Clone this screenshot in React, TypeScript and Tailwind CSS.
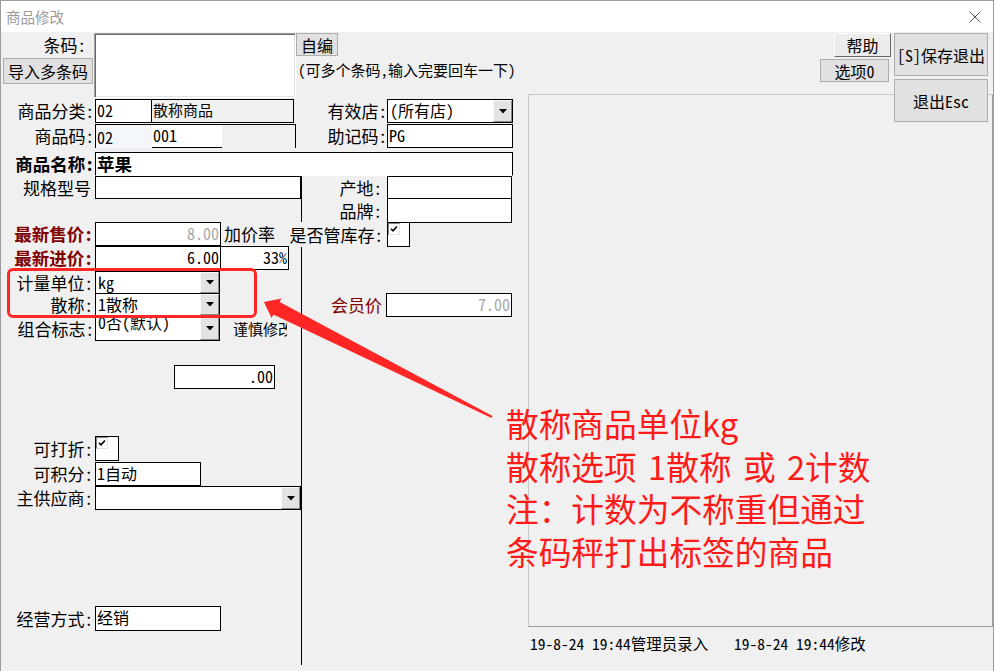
import React from "react";

const UI = "font-['Noto_Sans_Mono_CJK_SC','Noto_Sans_CJK_SC',sans-serif]";

type P = { className?: string; children?: React.ReactNode };

function Btn({ className = "", children }: P) {
  return (
    <div className={`shrink-0 bg-[#e1e1e1] border border-[#adadad] flex items-center justify-center whitespace-nowrap ${className}`}>
      {children}
    </div>
  );
}

function L({ className = "", children }: P) {
  return <div className={`shrink-0 flex items-center justify-end whitespace-nowrap leading-[18px] ${className}`}>{children}</div>;
}

function In({ className = "", children }: P) {
  return (
    <div className={`shrink-0 border border-black whitespace-nowrap leading-[20px] ${className}`}>
      {children}
    </div>
  );
}

function Drop() {
  return (
    <div className="w-[19px] h-full shrink-0 bg-[#e3e3e3] border border-t-[#fafafa] border-l-[#fafafa] border-r-[#8a8a8a] border-b-[#8a8a8a] flex items-center justify-center">
      <svg width="8" height="5" viewBox="0 0 8 5">
        <path d="M0 0H8L4 4.5Z" fill="#000" />
      </svg>
    </div>
  );
}

function Sel({ className = "", children }: P) {
  return (
    <div className={`shrink-0 border border-black bg-white flex ${className}`}>
      <div className="flex-1 pl-[2px] leading-[20px] whitespace-nowrap">{children}</div>
      <Drop />
    </div>
  );
}

function Chk({ className = "" }: P) {
  return (
    <div className={`shrink-0 border border-black bg-white ${className}`}>
      <div className="w-[12px] h-[12px] border border-t-[#808080] border-l-[#808080] border-r-[#e3e3e3] border-b-[#e3e3e3] bg-white flex items-center justify-center">
        <svg width="8" height="8" viewBox="0 0 8 8">
          <path d="M1 3.8L3 5.8L7 1.5" fill="none" stroke="#000" strokeWidth="1.6" />
        </svg>
      </div>
    </div>
  );
}

export default function App() {
  return (
    <div className={`relative w-[997px] h-[671px] bg-white overflow-hidden text-[16px] text-black ${UI}`}>
      <div className="w-[994px] h-[671px] border-l border-r border-t border-[#9c9c9c] bg-[#f0f0f0] flex flex-col">
        {/* title bar */}
        <div className="h-[31px] shrink-0 bg-white flex items-center justify-between pl-[5px] pr-[12px]">
          <span className="text-[#9a9a9a] text-[14.5px] font-['Noto_Sans_CJK_SC',sans-serif]">商品修改</span>
          <svg width="12" height="12" viewBox="0 0 12 12">
            <path d="M0.5 0.5L11.5 11.5M11.5 0.5L0.5 11.5" stroke="#555" strokeWidth="1" />
          </svg>
        </div>

        {/* top row */}
        <div className="h-[66px] shrink-0 flex items-start pr-[5px]">
          <div className="w-[93px] shrink-0 flex flex-col">
            <div className="h-[25px] leading-[25px] text-right pr-[8px] text-[17px]">条码:</div>
            <Btn className="ml-[2px] mt-[1px] w-[90px] h-[26px]">导入多条码</Btn>
          </div>
          <div className="mt-[1px] w-[202px] h-[65px] shrink-0 bg-white border border-t-[#a0a0a0] border-l-[#a0a0a0] border-r-white border-b-white shadow-[inset_1px_1px_0_#696969,inset_-1px_-1px_0_#e3e3e3]" />
          <div className="w-[42px] shrink-0 flex flex-col">
            <Btn className="mt-[1px] w-[42px] h-[23px]">自编</Btn>
            <div className="mt-[5px] ml-[2px] whitespace-nowrap leading-[18px] text-[15px]">(可多个条码,输入完要回车一下)</div>
          </div>
          <div className="flex-1" />
          <div className="flex flex-col items-end shrink-0">
            <div className="mt-[1px] w-[57px] h-[24px] bg-[#ececec] border border-t-white border-l-white border-r-[#696969] border-b-[#696969] flex items-center justify-center">帮助</div>
            <Btn className="mt-[2px] mr-[2px] w-[69px] h-[23px]">选项0</Btn>
          </div>
          <div className="ml-[3px] w-[94px] shrink-0 flex flex-col relative z-10">
            <Btn className="mt-[1px] h-[43px]">[S]保存退出</Btn>
            <Btn className="mt-[3px] h-[43px]">退出Esc</Btn>
          </div>
        </div>

        {/* body */}
        <div className="flex-1 flex items-start">
          <div className="w-[527px] shrink-0 flex flex-col">
            {/* row 1 */}
            <div className="mt-[1px] h-[24px] flex">
              <L className="w-[94px] pr-[1px] text-[17px]">商品分类:</L>
              <In className="w-[57px] h-full bg-white pl-[1px]">02</In>
              <In className="-ml-px w-[143px] h-full bg-[#f0f0f0] pl-[1px] text-[15px]">散称商品</In>
              <div className="w-[7px] shrink-0" />
              <L className="w-[86px] text-[17px]">有效店:</L>
              <Sel className="w-[126px] h-full">(所有店)</Sel>
            </div>
            {/* row 2 */}
            <div className="mt-[1px] h-[24px] flex">
              <L className="w-[94px] pr-[1px] text-[17px]">商品码:</L>
              <div className="w-[201px] h-full shrink-0 border-t border-l border-r border-black flex">
                <div className="w-[56px] bg-[#f3f6fb] pl-[1px] pt-[2px] leading-[20px]">02</div>
                <div className="w-[70px] bg-white border-b border-black pl-[1px] leading-[20px]">001</div>
                <div className="flex-1" />
              </div>
              <div className="w-[5px] shrink-0" />
              <L className="w-[86px] text-[17px]">助记码:</L>
              <In className="w-[126px] h-full bg-white pl-[1px]">PG</In>
            </div>
            {/* row 3 */}
            <div className="mt-[4px] h-[24px] flex">
              <L className="w-[94px] pr-[1px] font-bold text-[17.5px]">商品名称:</L>
              <div className="w-[418px] h-full shrink-0 border-t border-l border-r border-black border-b border-b-white bg-white font-bold text-[17.5px] pl-[1px] leading-[21px]">
                苹果
              </div>
            </div>

            {/* two columns */}
            <div className="flex items-start">
              <div className="w-[301px] h-[489px] shrink-0 border-r border-black flex flex-col">
                <div className="h-[23px] flex">
                  <L className="w-[94px] pr-[4px] text-[17px]">规格型号</L>
                  <In className="w-[206px] h-full bg-white" />
                </div>
                <div className="mt-[23px] h-[24px] flex">
                  <L className="w-[94px] pr-[2px] font-bold text-[17.5px] text-[#800000]">最新售价:</L>
                  <In className="w-[126px] h-full bg-white text-right pr-[1px] text-[#a8a8a8]">8.00</In>
                  <div className="pl-[3px] leading-[24px] whitespace-nowrap text-[17px]">加价率</div>
                </div>
                <div className="h-[24px] flex">
                  <L className="w-[94px] pr-[2px] font-bold text-[17.5px] text-[#800000]">最新进价:</L>
                  <In className="w-[126px] h-full bg-white text-right pr-[1px]">6.00</In>
                  <In className="-ml-px w-[69px] h-full bg-white text-right pr-[1px]">33%</In>
                </div>
                <div className="mt-[1px] h-[23px] flex">
                  <L className="w-[94px] pr-[2px] text-[17px]">计量单位:</L>
                  <Sel className="w-[125px] h-full">kg</Sel>
                </div>
                <div className="-mt-px h-[23px] flex">
                  <L className="w-[94px] pr-[2px] text-[17px]">散称:</L>
                  <Sel className="w-[125px] h-full">1散称</Sel>
                </div>
                <div className="mt-[1px] h-[24px] flex">
                  <L className="w-[94px] pr-[1px] text-[17px]">组合标志:</L>
                  <div className="w-[125px] h-full shrink-0 border-l border-r border-b border-black bg-white flex overflow-hidden">
                    <div className="flex-1 pl-[2px] -mt-[5px] leading-[20px] whitespace-nowrap overflow-hidden">0否(默认)</div>
                    <Drop />
                  </div>
                  <div className="ml-[13px] w-[54px] overflow-hidden whitespace-nowrap leading-[24px] text-[15px]">谨慎修改</div>
                </div>
                <div className="mt-[24px] h-[24px] flex">
                  <In className="ml-[173px] w-[101px] h-full bg-white text-right pr-[1px]">.00</In>
                </div>
                <div className="mt-[47px] h-[25px] flex">
                  <L className="w-[94px] pr-[2px] text-[17px]">可打折:</L>
                  <Chk className="w-[24px] h-full" />
                </div>
                <div className="mt-[1px] h-[24px] flex">
                  <L className="w-[94px] pr-[2px] text-[17px]">可积分:</L>
                  <In className="w-[106px] h-full bg-white pl-[1px]">1自动</In>
                </div>
                <div className="h-[24px] flex">
                  <L className="w-[94px] pr-[2px] text-[17px]">主供应商:</L>
                  <Sel className="w-[206px] h-full"> </Sel>
                </div>
                <div className="mt-[96px] h-[25px] flex">
                  <L className="w-[94px] pr-[2px] text-[17px]">经营方式:</L>
                  <In className="w-[126px] h-full bg-white pl-[1px]">经销</In>
                </div>
              </div>

              <div className="w-[226px] shrink-0 flex flex-col">
                <div className="h-[23px] flex">
                  <L className="w-[85px] pr-[5px] text-[17px]">产地:</L>
                  <In className="w-[125px] h-full bg-white" />
                </div>
                <div className="-mt-px h-[25px] flex">
                  <L className="w-[85px] pr-[5px] text-[17px]">品牌:</L>
                  <In className="w-[125px] h-full bg-white" />
                </div>
                <div className="-mt-px h-[25px] flex">
                  <L className="-ml-[12px] w-[97px] pr-[4px] bg-[#f0f0f0] relative z-[1] text-[17px]">是否管库存:</L>
                  <Chk className="w-[23px] h-full" />
                </div>
                <div className="mt-[46px] h-[24px] flex">
                  <L className="w-[84px] pr-[4px] text-[#800000] text-[17px]">会员价</L>
                  <In className="w-[126px] h-full bg-white text-right pr-[1px] text-[#a8a8a8]">7.00</In>
                </div>
              </div>
            </div>
          </div>

          {/* right panel */}
          <div className="flex-1 flex flex-col -mt-[4px]">
            <div className="h-[533px] border border-t-[#c8c8c8] border-l-[#c8c8c8] border-r-[#a0a0a0] border-b-[#a0a0a0]" />
            <div className="mt-[7px] pl-[2px] leading-[18px] whitespace-nowrap flex text-[15.5px]">
              <span className="w-[204px] shrink-0">19-8-24 19:44管理员录入</span>
              <span>19-8-24 19:44修改</span>
            </div>
          </div>
        </div>
      </div>

      {/* annotation overlays */}
      <div className="absolute left-[7px] top-[268px] w-[250px] h-[50px] border-[3px] border-[#ff2626] rounded-[6px]" />
      <svg className="absolute left-0 top-0 pointer-events-none" width="997" height="671" viewBox="0 0 997 671">
        <polygon
          points="264,302 281.4,298.5 279.7,302 492.5,416.1 491.5,417.9 273.3,314.6 271.6,318.1"
          fill="#ff2626"
        />
      </svg>
      <div className="absolute left-[506px] top-[402px] text-[32.7px] leading-[42.7px] text-[#ff1a1a] font-['Noto_Sans_CJK_SC',sans-serif] whitespace-nowrap">
        <div>散称商品单位kg</div>
        <div className="[word-spacing:4px]">散称选项 1散称 或 2计数</div>
        <div>注：计数为不称重但通过</div>
        <div>条码秤打出标签的商品</div>
      </div>
    </div>
  );
}
